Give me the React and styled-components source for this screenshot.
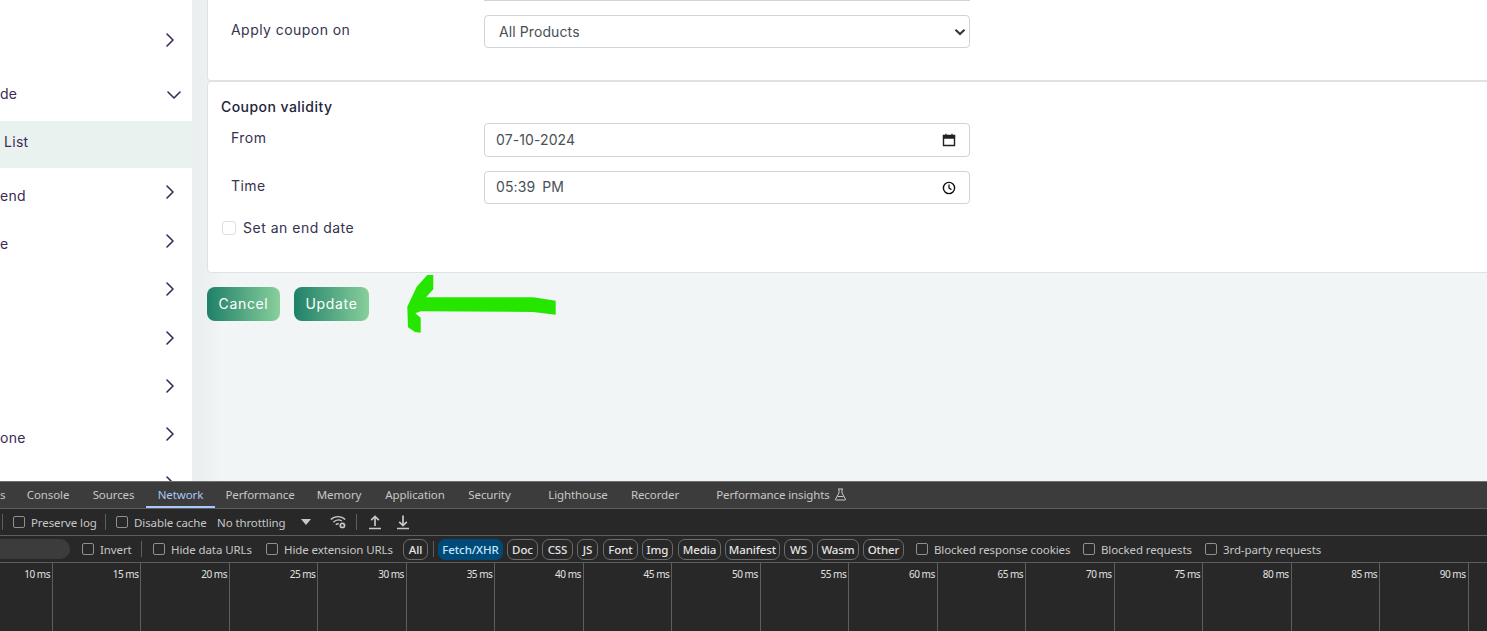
import React from "react";
import styled, { createGlobalStyle } from "styled-components";
import { ChevronRight, ChevronDown } from "lucide-react";

const GlobalStyle = createGlobalStyle`
  html, body { margin: 0; padding: 0; background: #fff; }
  * { box-sizing: border-box; }
`;

const PAGE_FONT = `"Inter", "Liberation Sans", sans-serif`;
const TOOL_FONT = `"Noto Sans", "Open Sans", sans-serif`;

const sideRows = [
  { gap: 15.8, label: "" },
  { gap: 6.6, label: "de", open: true },
  { gap: 2, label: "List", ml: 4, active: true },
  { gap: 0, label: "end" },
  { gap: 0, label: "e" },
  { gap: 0, label: "" },
  { gap: 0, label: "" },
  { gap: 0, label: "" },
  { gap: 0, label: "one" },
  { gap: 0, label: "" },
];

const tabs = [
  { name: "s", w: 15, flush: true },
  { name: "Console", w: 66 },
  { name: "Sources", w: 65 },
  { name: "Network", w: 69, active: true },
  { name: "Performance", w: 90 },
  { name: "Memory", w: 68 },
  { name: "Application", w: 84 },
  { name: "Security", w: 65 },
  { name: "Lighthouse", w: 82, ml: 15 },
  { name: "Recorder", w: 72 },
];

const chips = [
  { name: "Doc", ml: 4, w: 31 },
  { name: "CSS", ml: 4, w: 31 },
  { name: "JS", ml: 4, w: 21 },
  { name: "Font", ml: 5, w: 35 },
  { name: "Img", ml: 4, w: 31 },
  { name: "Media", ml: 5, w: 43 },
  { name: "Manifest", ml: 4, w: 55 },
  { name: "WS", ml: 4, w: 29 },
  { name: "Wasm", ml: 4, w: 42 },
  { name: "Other", ml: 4, w: 41 },
];

const ticks = [10, 15, 20, 25, 30, 35, 40, 45, 50, 55, 60, 65, 70, 75, 80, 85, 90];

export default function App() {
  return (
    <Page>
      <GlobalStyle />
      <Top>
        <Sidebar>
          {sideRows.map((r, i) => (
            <SideRow key={i} $gap={r.gap} $active={r.active} $open={r.open}>
              <SideLabel $ml={r.ml} $open={r.open} $active={r.active}>{r.label}</SideLabel>
              {!r.active && (r.open
                ? <ChevronDown size={24} strokeWidth={1.6} />
                : <ChevronRight size={24} strokeWidth={1.6} />)}
            </SideRow>
          ))}
        </Sidebar>
        <Main>
          <Card $first>
            <FieldEdge />
            <FormRow $top={14}>
              <Label>Apply coupon on</Label>
              <Field $pad={14} $select>
                All Products
                <svg width="12" height="8" viewBox="0 0 12 8"><path d="M1.5 1.8 6 6l4.5-4.2" fill="none" stroke="#343a40" strokeWidth="2.2" /></svg>
              </Field>
            </FormRow>
          </Card>
          <Card>
            <CardTitle>Coupon validity</CardTitle>
            <FormRow $top={8}>
              <Label>From</Label>
              <Field $tall>
                <FieldText>07-10-2024</FieldText>
                <svg width="14" height="14" viewBox="0 0 14 14"><path d="M1.5 2.5h11v10h-11z" fill="none" stroke="#222" strokeWidth="1.4" /><path d="M1.5 2.5h11v2.6h-11zM4 .8v2M10 .8v2" fill="#222" stroke="#222" strokeWidth="1.2" /></svg>
              </Field>
            </FormRow>
            <FormRow $top={14}>
              <Label>Time</Label>
              <Field>
                <FieldText $time>05:39&nbsp;PM</FieldText>
                <svg width="14" height="14" viewBox="0 0 14 14"><circle cx="7" cy="7" r="5.6" fill="none" stroke="#111" strokeWidth="1.4" /><path d="M7 3.6V7l2.4 1.6" fill="none" stroke="#111" strokeWidth="1.3" /></svg>
              </Field>
            </FormRow>
            <EndDate>
              <PageCheck type="checkbox" />
              Set an end date
            </EndDate>
          </Card>
          <Actions>
            <GradientButton>Cancel</GradientButton>
            <GradientButton $wide>Update</GradientButton>
          </Actions>
          <Scribble width="165" height="70" viewBox="0 0 165 70">
            <path d="M27.3 5h6v14.3l-7.3 8h107.3l22.4 3.4v14l-22.7-2.7-112.3-.7-5.4 2 5.4 4.4v15l-5.7-.7-7-4.7-.7-20.6 9.4-20z" fill="#26e600" />
          </Scribble>
        </Main>
      </Top>
      <DevTools>
        <TabBar>
          {tabs.map((t) => (
            <Tab key={t.name} $w={t.w} $ml={t.ml} $active={t.active} $flush={t.flush}>{t.name}</Tab>
          ))}
          <Tab $w={151} $ml={15}>
            Performance insights
            <svg width="13" height="13" viewBox="0 0 13 13"><path d="M4 1h5M5 1v4L1.5 11.2q-.3.8.5.8h9q.8 0 .5-.8L8 5V1M3.5 8.5h6" fill="none" stroke="#c7c7c7" strokeWidth="1" /></svg>
          </Tab>
        </TabBar>
        <ToolRow>
          <Divider $ml={2} />
          <Toggle $ml={10} $w={83}><ToolCheck type="checkbox" />Preserve log</Toggle>
          <Divider $ml={9} />
          <Toggle $ml={10} $w={90}><ToolCheck type="checkbox" />Disable cache</Toggle>
          <Toggle $ml={11} $w={69}>No throttling</Toggle>
          <ToolIcon $ml={15} width="10" height="6" viewBox="0 0 10 6"><path d="M0 0h10L5 6z" fill="#c7c7c7" /></ToolIcon>
          <ToolIcon $ml={19} width="16" height="14" viewBox="0 0 16 14">
            <path d="M.8 4.6C4.8.6 11.2.6 15.2 4.6M3.3 7.2C6 4.6 9.2 4.4 11.8 5.8M5.8 9.7c.9-.8 2-1 3-.8" fill="none" stroke="#c7c7c7" strokeWidth="1.4" />
            <circle cx="12.4" cy="10.4" r="2.1" fill="none" stroke="#c7c7c7" strokeWidth="1.7" />
          </ToolIcon>
          <Divider $ml={10} />
          <ToolIcon $ml={9} width="18" height="18" viewBox="0 0 18 18"><path d="M9 13V3.5M5.2 7.2 9 3.4l3.8 3.8M3 15.5h12" fill="none" stroke="#c7c7c7" strokeWidth="1.7" /></ToolIcon>
          <ToolIcon $ml={10} width="18" height="18" viewBox="0 0 18 18"><path d="M9 2.5V12M5.2 8.8 9 12.6l3.8-3.8M3 15.5h12" fill="none" stroke="#c7c7c7" strokeWidth="1.7" /></ToolIcon>
        </ToolRow>
        <ToolRow>
          <SearchPill />
          <Toggle $ml={12} $w={48}><ToolCheck type="checkbox" />Invert</Toggle>
          <Divider $ml={11} />
          <Toggle $ml={11} $w={99}><ToolCheck type="checkbox" />Hide data URLs</Toggle>
          <Toggle $ml={14} $w={126}><ToolCheck type="checkbox" />Hide extension URLs</Toggle>
          <Chip $ml={11} $w={25}>All</Chip>
          <Divider $ml={5} />
          <Chip $ml={4} $w={65} $active>Fetch/XHR</Chip>
          {chips.map((c) => (
            <Chip key={c.name} $ml={c.ml} $w={c.w}>{c.name}</Chip>
          ))}
          <Toggle $ml={12} $w={153}><ToolCheck type="checkbox" />Blocked response cookies</Toggle>
          <Toggle $ml={14} $w={108}><ToolCheck type="checkbox" />Blocked requests</Toggle>
          <Toggle $ml={14} $w={116}><ToolCheck type="checkbox" />3rd-party requests</Toggle>
        </ToolRow>
        <Timeline>
          {ticks.map((t) => (
            <Tick key={t} $first={t === 10}>{t} ms</Tick>
          ))}
        </Timeline>
      </DevTools>
    </Page>
  );
}

const Page = styled.div`
  width: 1487px;
  height: 631px;
  overflow: hidden;
  display: flex;
  flex-direction: column;
  font-family: ${PAGE_FONT};
`;

const Top = styled.div`
  height: 481px;
  display: flex;
  overflow: hidden;
`;

const Sidebar = styled.nav`
  width: 192px;
  flex: none;
  background: #fff;
`;

const SideRow = styled.div`
  height: ${(p) => (p.$active ? "47px" : "48.4px")};
  margin-top: ${(p) => p.$gap}px;
  display: flex;
  align-items: center;
  justify-content: space-between;
  padding-right: ${(p) => (p.$open ? "6px" : "10px")};
  background: ${(p) => (p.$active ? "#e9f2ee" : "transparent")};
  color: #3c2a56;
`;

const SideLabel = styled.span`
  margin-left: ${(p) => p.$ml || 0}px;
  padding-top: ${(p) => (p.$open || p.$active ? "0" : "6px")};
  padding-bottom: ${(p) => (p.$active ? "6px" : p.$open ? "2px" : "0")};
  font-size: 14px;
  letter-spacing: 0.3px;
  color: #3c2a56;
`;

const Main = styled.main`
  position: relative;
  flex: 1;
  min-width: 0;
  padding-left: 15px;
  background: linear-gradient(to right, #e9eeee 0, #ecf0f1 15px, #f1f5f6 28px);
`;

const Card = styled.section`
  width: 1400px;
  height: ${(p) => (p.$first ? "81px" : "192px")};
  background: #fff;
  border: 1px solid #dfe2e5;
  border-top: ${(p) => (p.$first ? "none" : "1px solid #dfe2e5")};
  border-radius: ${(p) => (p.$first ? "0 0 4px 4px" : "4px")};
`;

const FieldEdge = styled.div`
  width: 486px;
  height: 1px;
  margin-left: 276px;
  background: #ced4da;
`;

const FormRow = styled.div`
  display: flex;
  align-items: flex-start;
  margin-top: ${(p) => p.$top}px;
  padding-left: 23px;
`;

const Label = styled.label`
  width: 253px;
  flex: none;
  padding-top: 6px;
  font-size: 14px;
  line-height: 18px;
  letter-spacing: 0.45px;
  color: #37324f;
`;

const Field = styled.div`
  width: 486px;
  height: ${(p) => (p.$tall ? "34px" : "33px")};
  display: flex;
  align-items: center;
  justify-content: space-between;
  padding: 0 ${(p) => (p.$select ? "3px" : "13px")} 0 ${(p) => p.$pad || 11}px;
  border: 1px solid #ced4da;
  border-radius: 4px;
  background: #fff;
  font-size: 14px;
  letter-spacing: 0.1px;
  color: #495057;
`;

const FieldText = styled.span`
  margin-top: -2px;
  word-spacing: ${(p) => (p.$time ? "3px" : "0")};
`;

const CardTitle = styled.h3`
  margin: 16px 0 0 13px;
  font-size: 14px;
  line-height: 17px;
  font-weight: 500;
  letter-spacing: 0.45px;
  color: #22243a;
`;

const EndDate = styled.label`
  display: flex;
  align-items: center;
  gap: 7px;
  margin: 14px 0 0 14px;
  font-size: 14px;
  line-height: 20px;
  letter-spacing: 0.5px;
  color: #37324f;
`;

const PageCheck = styled.input`
  appearance: none;
  width: 14px;
  height: 14px;
  margin: 0;
  border: 1px solid #dcdfe3;
  border-radius: 3px;
  background: #fff;
`;

const Actions = styled.div`
  display: flex;
  gap: 14px;
  margin-top: 14px;
`;

const GradientButton = styled.button`
  width: ${(p) => (p.$wide ? "75px" : "73px")};
  height: 34px;
  padding: 0 0 1px;
  border: none;
  border-radius: 8px;
  background: linear-gradient(to right, #1f8068, #88cf9c);
  font-family: ${PAGE_FONT};
  font-size: 14px;
  font-weight: 400;
  letter-spacing: 0.65px;
  color: #fff;
`;

const Scribble = styled.svg`
  position: absolute;
  left: 208px;
  top: 270px;
`;

const DevTools = styled.div`
  height: 150px;
  flex: none;
  display: flex;
  flex-direction: column;
  border-top: 1px solid #6f6f6f;
  background: #282828;
  font-family: ${TOOL_FONT};
  font-size: 11.5px;
  letter-spacing: -0.1px;
  color: #c7c7c7;
`;

const TabBar = styled.div`
  height: 27px;
  flex: none;
  display: flex;
  background: #3c3c3c;
  border-bottom: 1px solid #5e5e5e;
`;

const Tab = styled.div`
  width: ${(p) => p.$w}px;
  margin-left: ${(p) => p.$ml || 0}px;
  flex: none;
  display: flex;
  align-items: center;
  justify-content: ${(p) => (p.$flush ? "flex-start" : "center")};
  gap: 4px;
  white-space: nowrap;
  color: ${(p) => (p.$active ? "#a8c7fa" : "#c7c7c7")};
  border-bottom: 2px solid ${(p) => (p.$active ? "#a8c7fa" : "transparent")};
`;

const ToolRow = styled.div`
  height: 27px;
  flex: none;
  display: flex;
  align-items: center;
  border-bottom: 1px solid #5e5e5e;
`;

const Divider = styled.span`
  width: 1px;
  height: 16px;
  flex: none;
  margin-left: ${(p) => p.$ml}px;
  background: #5e5e5e;
`;

const Toggle = styled.label`
  width: ${(p) => p.$w}px;
  margin-left: ${(p) => p.$ml}px;
  flex: none;
  display: flex;
  align-items: center;
  gap: 6px;
  white-space: nowrap;
`;

const ToolCheck = styled.input`
  appearance: none;
  width: 12px;
  height: 12px;
  flex: none;
  margin: 0;
  border: 1px solid #8e918f;
  border-radius: 2px;
  background: transparent;
`;

const ToolIcon = styled.svg`
  flex: none;
  margin-left: ${(p) => p.$ml}px;
`;

const SearchPill = styled.div`
  width: 70px;
  height: 20px;
  flex: none;
  border-radius: 0 10px 10px 0;
  background: #3c3c3c;
`;

const Chip = styled.span`
  width: ${(p) => p.$w}px;
  height: 21px;
  margin-left: ${(p) => p.$ml}px;
  flex: none;
  display: flex;
  align-items: center;
  justify-content: center;
  border-radius: 7px;
  border: 1px solid ${(p) => (p.$active ? "#004a77" : "#6b6b6b")};
  background: ${(p) => (p.$active ? "#004a77" : "transparent")};
  color: ${(p) => (p.$active ? "#c2e7ff" : "#e3e3e3")};
  font-weight: 500;
  white-space: nowrap;
`;

const Timeline = styled.div`
  flex: 1;
  display: flex;
`;

const Tick = styled.div`
  width: ${(p) => (p.$first ? "53px" : "88.47px")};
  flex: none;
  padding: 5px 2px 0 0;
  text-align: right;
  border-right: 1px solid #5e5e5e;
  font-size: 10px;
  line-height: 13px;
  letter-spacing: -0.5px;
  color: #e3e3e3;
`;
